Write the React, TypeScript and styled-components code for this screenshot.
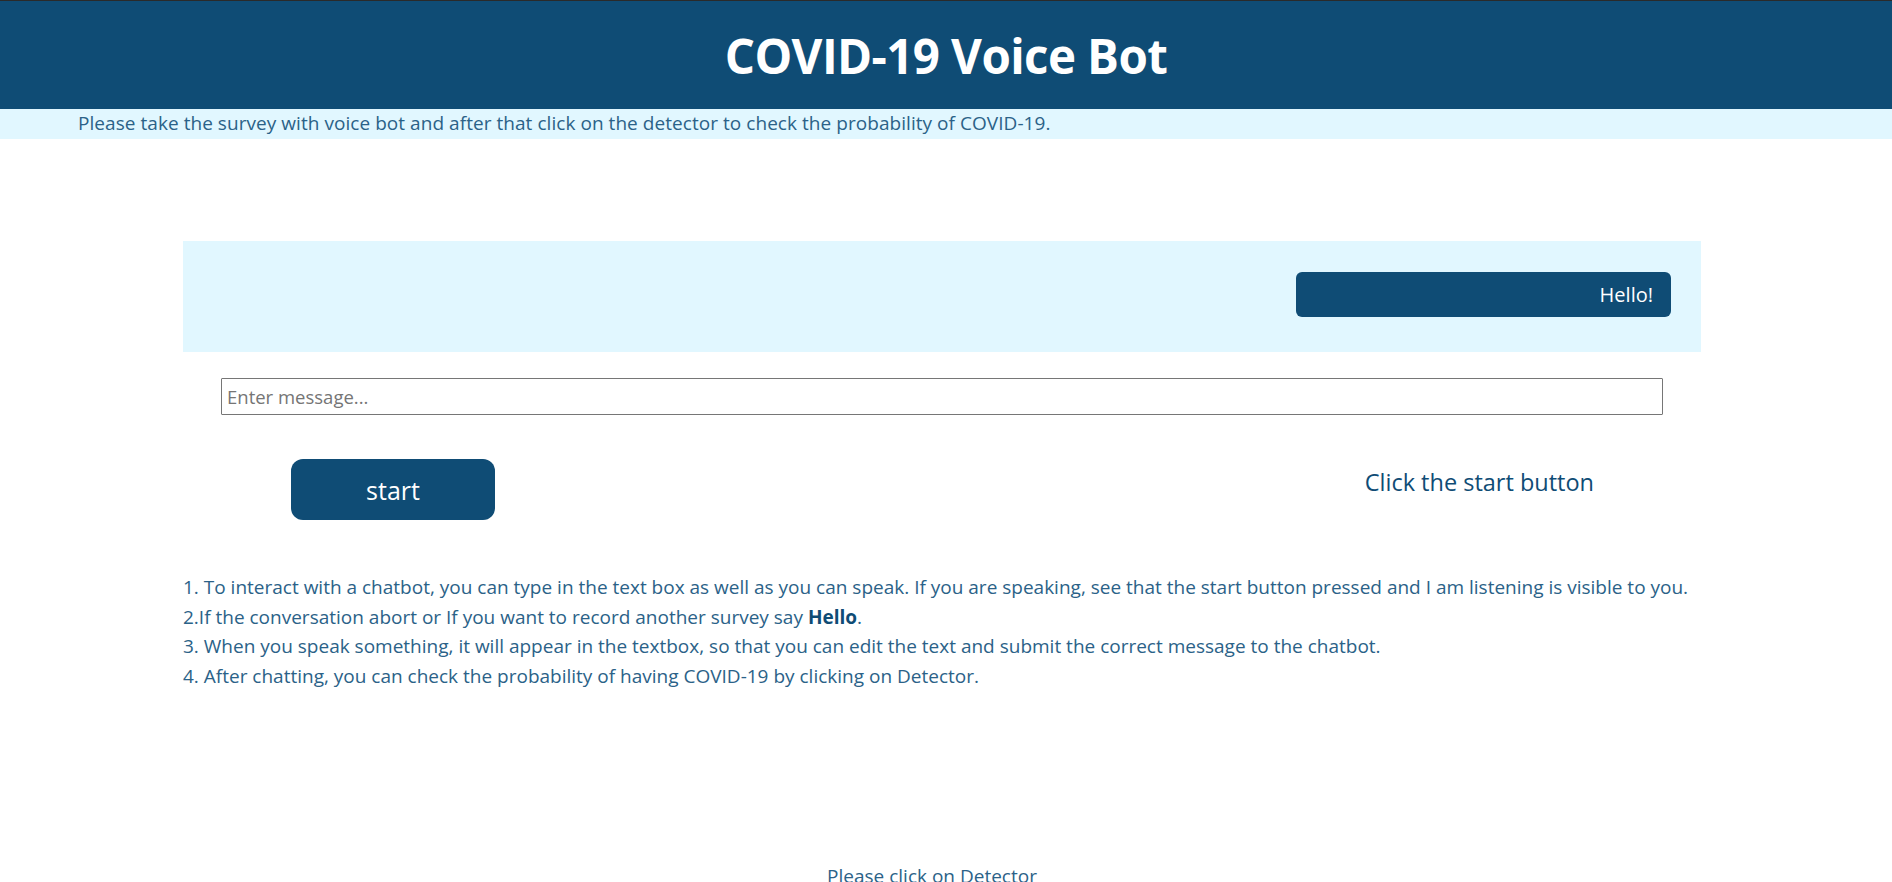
import React from 'react'
import styled, {createGlobalStyle} from 'styled-components'

const Global = createGlobalStyle`
  html, body {
    margin: 0;
    padding: 0;
    background: #ffffff;
    font-family: "Open Sans", "Noto Sans", sans-serif;
  }
`

const Header = styled.header`
  background-color: #0f4c75;
  border-top: 1px solid #2a2a2a;
  height: 108px;
  display: flex;
  align-items: center;
  justify-content: center;
`

const Title = styled.h1`
  margin: 0;
  color: #ffffff;
  font-size: 47.5px;
  font-weight: 700;
  letter-spacing: -0.6px;
`

const Notice = styled.div`
  background-color: #e1f7ff;
  color: #2b6288;
  font-size: 19px;
  height: 30px;
  line-height: 29px;
  padding-left: 78px;
  letter-spacing: 0.05px;
`

const Main = styled.main`
  width: 1518px;
  margin: 102px 0 0 183px;
`

const ChatBox = styled.div`
  background-color: #e1f7ff;
  height: 111px;
  display: flex;
  align-items: flex-start;
  justify-content: flex-end;
  padding: 31px 30px 0 0;
  box-sizing: border-box;
`

const Bubble = styled.div`
  background-color: #0f4c75;
  color: #ffffff;
  width: 375px;
  height: 45px;
  border-radius: 6px;
  box-sizing: border-box;
  padding-right: 18px;
  display: flex;
  align-items: center;
  justify-content: flex-end;
  font-size: 20px;
`

const MessageInput = styled.input`
  display: block;
  width: 1442px;
  height: 37px;
  margin: 26px auto 0;
  box-sizing: border-box;
  border: 1px solid #767676;
  border-radius: 1px;
  padding: 0 5px;
  font-family: "Open Sans", "Noto Sans", sans-serif;
  font-size: 18.5px;
  color: #333;
  outline: none;
  &::placeholder {
    color: #757575;
  }
`

const Controls = styled.div`
  display: flex;
  align-items: center;
  justify-content: space-between;
  padding: 0 107px 0 108px;
  margin-top: 44px;
`

const StartButton = styled.button`
  width: 204px;
  height: 61px;
  border: none;
  border-radius: 12px;
  background-color: #0f4c75;
  color: #ffffff;
  font-family: "Open Sans", "Noto Sans", sans-serif;
  font-size: 25px;
  cursor: pointer;
`

const Status = styled.div`
  color: #0f4c75;
  font-size: 23.5px;
  margin-bottom: 16px;
`

const Steps = styled.div`
  margin-top: 53px;
  color: #2b6288;
  font-size: 19px;
  line-height: 29.5px;
  b {
    color: #0f4c75;
  }
`

const Footer = styled.div`
  margin-top: 172px;
  text-align: center;
  color: #2b6288;
  font-size: 19px;
  padding-right: 28px;
`

export default function App() {
  return (
    <>
      <Global/>
      <Header>
        <Title>COVID-19 Voice Bot</Title>
      </Header>
      <Notice>Please take the survey with voice bot and after that click on the detector to check the probability of COVID-19.</Notice>
      <Main>
        <ChatBox>
          <Bubble>Hello!</Bubble>
        </ChatBox>
        <MessageInput placeholder="Enter message..."/>
        <Controls>
          <StartButton>start</StartButton>
          <Status>Click the start button</Status>
        </Controls>
        <Steps>
          <div>1. To interact with a chatbot, you can type in the text box as well as you can speak. If you are speaking, see that the start button pressed and I am listening is visible to you.</div>
          <div>2.If the conversation abort or If you want to record another survey say <b>Hello</b>.</div>
          <div>3. When you speak something, it will appear in the textbox, so that you can edit the text and submit the correct message to the chatbot.</div>
          <div>4. After chatting, you can check the probability of having COVID-19 by clicking on Detector.</div>
        </Steps>
      </Main>
      <Footer>Please click on Detector</Footer>
    </>
  )
}
